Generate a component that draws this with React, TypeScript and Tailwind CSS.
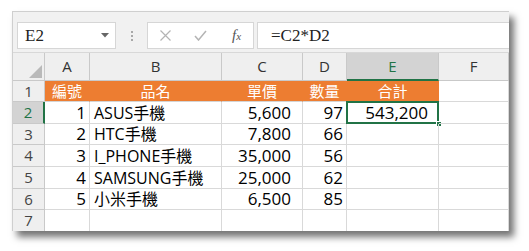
import React from 'react';

const cols = [
  { key: 'A', w: 'w-[45px]', pr: 'pr-[3px]' },
  { key: 'B', w: 'w-[132px]', pr: '' },
  { key: 'C', w: 'w-[81px]', pr: 'pr-[11px]' },
  { key: 'D', w: 'w-[44px]', pr: 'pr-[3px]' },
  { key: 'E', w: 'w-[92px]', pr: 'pr-[10px]' },
  { key: 'F', w: 'w-[70px]', pr: 'pr-[3px]' },
];

const rows = [
  { n: 1, h: 'h-[21px]', cells: ['編號', '品名', '單價', '數量', '合計', ''] },
  { n: 2, h: 'h-[22px]', cells: ['1', 'ASUS手機', '5,600', '97', '543,200', ''] },
  { n: 3, h: 'h-[21px]', cells: ['2', 'HTC手機', '7,800', '66', '', ''] },
  { n: 4, h: 'h-[22px]', cells: ['3', 'I_PHONE手機', '35,000', '56', '', ''] },
  { n: 5, h: 'h-[22px]', cells: ['4', 'SAMSUNG手機', '25,000', '62', '', ''] },
  { n: 6, h: 'h-[21px]', cells: ['5', '小米手機', '6,500', '85', '', ''] },
  { n: 7, h: 'h-[22px]', cells: ['', '', '', '', '', ''] },
];

const font = { fontFamily: '"Open Sans", "Noto Sans CJK TC", sans-serif' };
const serif = { fontFamily: '"Liberation Serif", "DejaVu Serif", serif' };

const App: React.FC = () => {
  return (
    <div className="w-[529px] h-[251px] bg-white pt-[11px] pl-[12px]" style={font}>
      <div className="w-[497px] h-[220px] bg-white border-t border-l border-[#cfcfcf] shadow-[5px_6px_7px_rgba(0,0,0,0.55)] overflow-hidden">
        {/* formula bar */}
        <div className="h-[40px] bg-[#f1f1f1] flex items-start pt-[10px] pl-[4px]">
          <div className="w-[99px] h-[27px] bg-white border border-[#d6d6d6] flex items-center justify-between pl-[7px] pr-[6px]">
            <span className="text-[17px] text-[#222]" style={serif}>E2</span>
            <svg width="8" height="5" viewBox="0 0 8 5"><path d="M0 0h8L4 4.5z" fill="#666" /></svg>
          </div>
          <div className="w-[31px] h-[27px] flex flex-col items-center justify-center gap-[2px]">
            <span className="w-[2px] h-[2px] bg-[#a8a8a8]" />
            <span className="w-[2px] h-[2px] bg-[#a8a8a8]" />
            <span className="w-[2px] h-[2px] bg-[#a8a8a8]" />
          </div>
          <div className="w-[107px] h-[27px] bg-white border border-[#d6d6d6] flex items-center">
            <svg className="ml-[12px]" width="11" height="11" viewBox="0 0 11 11">
              <path d="M0.5 0.5L10.5 10.5M10.5 0.5L0.5 10.5" stroke="#b4b4b4" strokeWidth="1.2" />
            </svg>
            <svg className="ml-[23px]" width="13" height="11" viewBox="0 0 13 11">
              <path d="M1 6L4.5 10L12 1" stroke="#b4b4b4" strokeWidth="1.5" fill="none" />
            </svg>
            <span className="ml-[25px] text-[15px] italic text-[#555]" style={serif}>
              f<span className="text-[11px]">x</span>
            </span>
          </div>
          <div className="ml-[3px] flex-1 h-[27px] bg-white border border-[#d6d6d6] border-r-0 flex items-center pl-[13px]">
            <span className="text-[17px] text-[#222]" style={serif}>=C2*D2</span>
          </div>
        </div>

        {/* column headers */}
        <div className="flex h-[29px] bg-[#efefef] border-t border-[#d8d8d8]">
          <div className="w-[32px] border-r border-b border-[#c9c9c9] flex items-end justify-end p-[2px]">
            <svg width="13" height="13" viewBox="0 0 13 13"><path d="M13 0V13H0z" fill="#b9b9b9" /></svg>
          </div>
          {cols.map((c) => (
            <div
              key={c.key}
              className={`${c.w} flex items-center justify-center text-[15px] border-r ${
                c.key === 'E'
                  ? 'bg-[#d3d3d3] text-[#217346] border-b-2 border-b-[#217346] border-r-[#c9c9c9]'
                  : 'text-[#333] border-b border-[#c9c9c9]'
              }`}
            >
              {c.key}
            </div>
          ))}
        </div>

        {/* rows */}
        {rows.map((r) => (
          <div key={r.n} className={`flex ${r.h}`}>
            <div
              className={`w-[32px] flex items-center justify-center text-[15px] text-[#444] border-b border-[#c9c9c9] ${
                r.n === 2 ? 'bg-[#d3d3d3] text-[#217346] border-r-2 border-r-[#217346]' : 'bg-[#efefef] border-r'
              }`}
            >
              {r.n}
            </div>
            {cols.map((c, i) => {
              const v = r.cells[i];
              const head = r.n === 1 && i < 5;
              const sel = r.n === 2 && c.key === 'E';
              const align = head ? 'justify-center' : i === 1 ? 'justify-start pl-[4px]' : `justify-end ${c.pr}`;
              const size = head ? 'text-[15px]' : i === 1 ? 'text-[16px]' : 'text-[17px]';
              return (
                <div
                  key={c.key}
                  className={`${c.w} relative flex items-center ${align} ${size} whitespace-nowrap border-r border-b ${
                    head ? 'bg-[#ed7d31] text-white border-[#ed7d31] border-b-[#d4d4d4]' : 'text-black border-[#d9d9d9]'
                  }`}
                >
                  {sel && (
                    <>
                      <div className="absolute -left-[1px] -top-[1px] right-[-1px] bottom-[-1px] border-2 border-[#217346]" />
                      <div className="absolute right-[-4px] bottom-[-4px] w-[6px] h-[6px] bg-[#217346] border border-white" />
                    </>
                  )}
                  <span className="relative">{v}</span>
                </div>
              );
            })}
          </div>
        ))}
      </div>
    </div>
  );
};

export default App;
